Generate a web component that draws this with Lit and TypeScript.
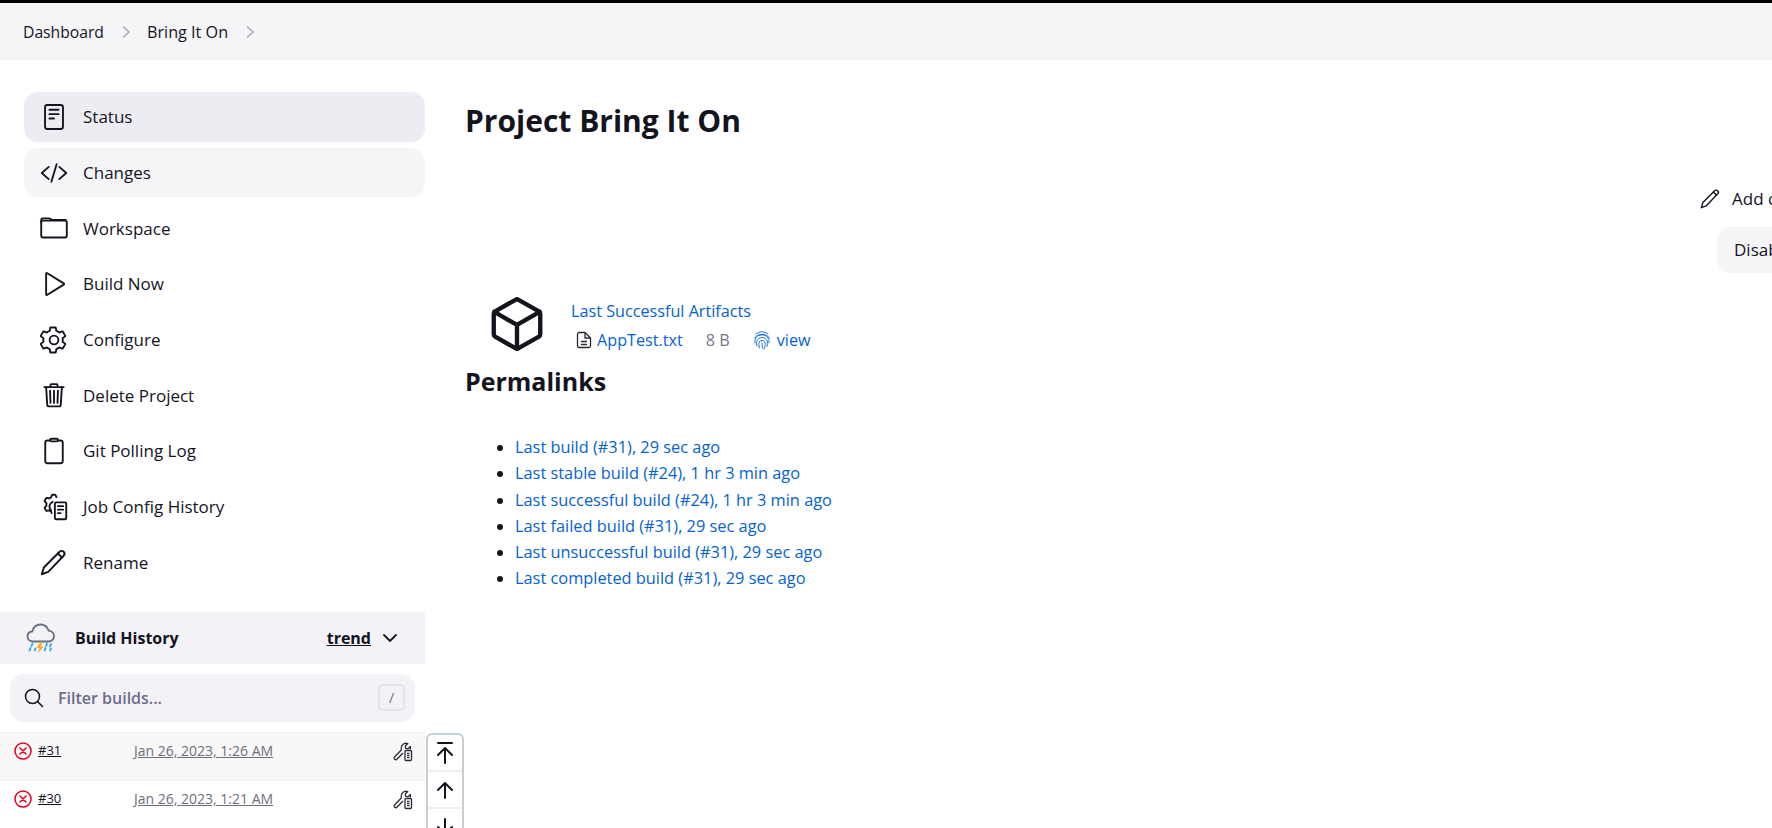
import { LitElement, css, html, svg } from 'lit';
import { customElement } from 'lit/decorators.js';

const stroke = (body: unknown, size = 28, box = 512, sw = 34) => html`
  <svg width=${size} height=${size} viewBox="0 0 ${box} ${box}" fill="none" stroke="currentColor"
    stroke-width=${sw} stroke-linecap="round" stroke-linejoin="round">${body}</svg>`;

const gear = svg`<path d="M256 176a80 80 0 1 0 0 160 80 80 0 0 0 0-160z"/><path d="M416 256c0-11-1-21-3-31l44-35c4-3 5-9 3-14l-42-72c-3-5-8-6-13-5l-52 21c-16-13-35-23-55-29l-8-55c-1-5-5-8-10-8h-84c-5 0-9 3-10 8l-8 55c-20 6-39 16-55 29l-52-21c-5-1-10 0-13 5l-42 72c-2 5-1 11 3 14l44 35c-2 10-3 20-3 31s1 21 3 31l-44 35c-4 3-5 9-3 14l42 72c3 5 8 6 13 5l52-21c16 13 35 23 55 29l8 55c1 5 5 8 10 8h84c5 0 9-3 10-8l8-55c20-6 39-16 55-29l52 21c5 1 10 0 13-5l42-72c2-5 1-11-3-14l-44-35c2-10 3-20 3-31z"/>`;

const pencil = svg`<path d="M32 480l38-124L358 68c20-20 54-20 74 0s20 54 0 74L150 438z"/><path d="M326 100l76 76"/>`;

const icons: Record<string, unknown> = {
  status: stroke(svg`<rect x="92" y="36" width="328" height="440" rx="40"/><path d="M172 124h168M172 204h168M172 284h84"/>`),
  changes: stroke(svg`<path d="M160 368L32 256l128-112M352 368l128-112-128-112M304 96l-96 320"/>`),
  workspace: stroke(svg`<path d="M22 150v-44c0-14 11-26 26-26h120c20 0 30 30 60 30h244"/><rect x="22" y="120" width="468" height="310" rx="32"/>`),
  build: stroke(svg`<path d="M112 70v372c0 12 13 18 22 12l300-186c8-5 8-18 0-24L134 58c-9-6-22 0-22 12z"/>`),
  configure: stroke(gear),
  del: stroke(svg`<path d="M112 112l20 320c1 18 15 32 32 32h184c18 0 31-14 32-32l20-320"/><path d="M80 112h352M192 112V72c0-9 7-16 16-16h96c9 0 16 7 16 16v40M256 176v224M184 176l8 224M328 176l-8 224"/>`),
  git: stroke(svg`<rect x="96" y="64" width="320" height="416" rx="40"/><rect x="184" y="32" width="144" height="48" rx="24" fill="#fff"/>`),
  history: stroke(svg`<path d="M300 74l-14-30c-4-7-10-12-18-12h-36c-8 0-14 5-17 12l-12 36c-13 5-25 12-36 20l-37-10c-7-2-15 1-19 7l-22 40c-4 7-3 15 3 21l27 28c-1 7-2 14-2 22s1 15 2 22l-27 28c-6 6-7 14-3 21l22 40c4 6 12 9 19 7l37-10c11 8 23 15 36 20l8 30"/><path d="M232 164a90 90 0 0 0-30 150"/><rect x="272" y="172" width="208" height="308" rx="24" fill="#fff"/><path d="M328 240h96M328 304h96M328 368h48"/>`),
  rename: stroke(pencil),
};

const menu = [
  { label: 'Status', icon: 'status', cls: 'active' },
  { label: 'Changes', icon: 'changes', cls: 'hover' },
  { label: 'Workspace', icon: 'workspace', cls: '' },
  { label: 'Build Now', icon: 'build', cls: '' },
  { label: 'Configure', icon: 'configure', cls: '' },
  { label: 'Delete Project', icon: 'del', cls: '' },
  { label: 'Git Polling Log', icon: 'git', cls: '' },
  { label: 'Job Config History', icon: 'history', cls: '' },
  { label: 'Rename', icon: 'rename', cls: '' },
];

const builds = [
  { id: '#31', date: 'Jan 26, 2023, 1:26 AM', cls: 'shaded' },
  { id: '#30', date: 'Jan 26, 2023, 1:21 AM', cls: '' },
];

const permalinks = [
  'Last build (#31), 29 sec ago',
  'Last stable build (#24), 1 hr 3 min ago',
  'Last successful build (#24), 1 hr 3 min ago',
  'Last failed build (#31), 29 sec ago',
  'Last unsuccessful build (#31), 29 sec ago',
  'Last completed build (#31), 29 sec ago',
];

const chevron = html`<svg class="crumb-sep" width="8" height="12" viewBox="0 0 8 12" fill="none" stroke="#adadbc" stroke-width="1.6"><path d="M1 .5L7 6l-6 5.500"/></svg>`;

const weather = html`<svg width="32" height="32" viewBox="0 0 32 32" fill="none">
  <path d="M8 19.500c-3 0-5.500-2-5.500-5 0-2.800 2-4.800 4.800-5C8.500 5 11.500 2.500 15.500 2.500c4 0 7 2.500 8.200 6.200 3 .3 5.300 2.500 5.300 5.500 0 3-2.500 5.300-5.500 5.300z" stroke="#667080" stroke-width="1.800"/>
  <path d="M15.500 20l-4 6h3l-1.500 5 6-6.500h-3.500l2.500-4.500z" fill="#f9a825"/>
  <path d="M7.500 21.500l-1 2.500M5.500 26l-1 2.500M10.500 26.500l-.8 2M22 21.500l-1 2.500M20.500 26l-.8 2.500M26 22l-1 2.500M26 26.500l-.8 2" stroke="#29a8e0" stroke-width="1.800" stroke-linecap="round"/>
</svg>`;

const failed = html`<svg width="18" height="18" viewBox="0 0 18 18" fill="none" stroke="#e6001f" stroke-width="1.500" stroke-linecap="round">
  <circle cx="9" cy="9" r="8"/><path d="M6 6l6 6M12 6l-6 6"/></svg>`;

const tools = html`<svg width="20" height="20" viewBox="0 0 20 20" fill="none" stroke="#2a2a33" stroke-width="1.300" stroke-linejoin="round">
  <path d="M1.500 15l6.800-7C7.500 4.500 9.500 1.500 13 1.200c.7 0 1.300.1 1.800.3L12.300 4l.4 2.300 2.300.4 2.300-2.300c.3 1 .3 2-.1 3"/>
  <path d="M1.500 15c-1.300 1.500.9 3.700 2.400 2.300l6.100-6.300"/>
  <rect x="12" y="8.500" width="6.500" height="10" rx="1" fill="#fff"/><path d="M14 11.300h2.500M14 13.500h2.500M14 15.700h2.500"/></svg>`;

const fileIcon = html`<svg width="16" height="18" viewBox="0 0 16 18" fill="none" stroke="#2a2a33" stroke-width="1.300" stroke-linejoin="round">
  <path d="M1.500 3c0-1 .7-1.500 1.500-1.500H9L14.500 7v8c0 1-.7 1.500-1.500 1.500H3c-.8 0-1.500-.5-1.500-1.500z"/><path d="M9 1.500V7h5.500M5 10.500h6M5 13.500h6"/></svg>`;

const fingerprint = html`<svg width="18" height="20" viewBox="0 0 18 20" fill="none" stroke="#1a73dc" stroke-width="1" stroke-linecap="round">
  <path d="M3 4c3.500-3 8.500-3 12 0"/><path d="M1.500 8c3-5 12-5 15 0"/><path d="M2 13c-1-6 3-8 7-8s8 2.500 7 8"/>
  <path d="M4 16c-1-3-1-8 5-8.500 6 .5 6 5 5 9"/><path d="M6.500 18c-1-3-1.500-7.500 2.500-7.500s3.500 4 2.500 8"/><path d="M9 13c0 2 .2 4 1 6"/></svg>`;

const cube = html`<svg width="62" height="62" viewBox="0 0 512 512" fill="none" stroke="#14141f" stroke-width="36" stroke-linejoin="round" stroke-linecap="round">
  <path d="M448 341V171c0-8-4-15-11-19L269 56c-8-5-18-5-26 0L75 152c-7 4-11 11-11 19v170c0 8 4 15 11 19l168 96c8 5 18 5 26 0l168-96c7-4 11-11 11-19z"/>
  <path d="M69 156l187 108 187-108M256 264v192"/></svg>`;

const arrow = (d: string) => html`<svg width="22" height="24" viewBox="0 0 22 24" fill="none" stroke="#14141f" stroke-width="2" stroke-linecap="round" stroke-linejoin="round"><path d=${d}/></svg>`;

@customElement('app-root')
export class AppRoot extends LitElement {
  static styles = css`
    :host {
      display: block;
      width: 1772px;
      height: 828px;
      overflow: hidden;
      background: #fff;
      color: #14141f;
      font-family: 'Open Sans', 'Noto Sans', sans-serif;
      font-size: 16px;
    }
    a { color: inherit; text-decoration: none; }

    .crumbs {
      display: flex;
      align-items: center;
      height: 57px;
      border-top: 3px solid #000;
      background: #f5f5f8;
      padding-left: 23px;
      font-size: 15.7px;
    }
    .crumbs .current { font-size: 16.2px; }
    .crumb-sep { margin: 0 17px 0 18px; }

    .page { display: flex; width: 2100px; }

    .side { position: relative; width: 425px; flex: none; padding-top: 32px; }
    .menu { display: flex; flex-direction: column; gap: 6px; margin: 0 0 0 24px; }
    .item {
      display: flex;
      align-items: center;
      height: 49.7px;
      border-radius: 14px;
      padding-left: 16px;
      gap: 15px;
      font-size: 17px;
    }
    .item svg { flex: none; }
    .item.active { background: #ecedf3; }
    .item.hover { background: #f5f5f8; }

    .history-head {
      display: flex;
      align-items: center;
      height: 52px;
      margin-top: 24.7px;
      background: #f2f2f7;
      padding: 0 26px 0 25px;
      font-weight: 700;
    }
    .history-head .title { margin-left: 18px; flex: 1; }
    .history-head .trend { text-decoration: underline; margin-right: 10px; }

    .filter {
      display: flex;
      align-items: center;
      height: 48px;
      margin: 10px;
      padding: 0 10px 0 14px;
      background: #f2f2f7;
      border-radius: 14px;
      color: #6c6c8a;
      font-weight: 600;
    }
    .filter span { flex: 1; margin-left: 14px; }
    .filter kbd {
      width: 27px;
      height: 27px;
      box-sizing: border-box;
      border: 2px solid #e4e4ee;
      border-radius: 5px;
      font: inherit;
      font-weight: 400;
      font-size: 14px;
      text-align: center;
      line-height: 23px;
    }

    .row {
      display: flex;
      height: 39px;
      border-top: 1px solid #f0f0f0;
      padding: 8px 12px 0 14px;
      font-size: 14px;
    }
    .row.shaded { background: #f8f8f8; }
    .row .num { margin-left: 6px; width: 96px; font-size: 13px; line-height: 19px; text-decoration: underline; }
    .row .date { flex: 1; color: #6f6f7a; line-height: 19px; text-decoration: underline; }
    .row svg { margin-top: 1px; }

    .scroller {
      position: absolute;
      left: 426px;
      top: 673px;
      width: 38px;
      height: 120px;
      border: 2px solid #c5d0d6;
      border-radius: 6px;
      background: #fff;
      box-sizing: border-box;
    }
    .scroller div {
      height: 35px;
      display: flex;
      align-items: center;
      justify-content: center;
      border-bottom: 2px solid #eee;
    }

    .main { flex: none; width: 1600px; padding-left: 40px; box-sizing: border-box; }
    h1 { margin: 0; padding-top: 38px; font-size: 30px; line-height: 46px; font-weight: 700; }
    .actions { display: flex; flex-direction: column; align-items: flex-start; margin-top: 42.5px; font-size: 17px; }
    .add { display: flex; align-items: center; gap: 11px; height: 23px; margin-left: 1235px; }
    .disable {
      background: #f5f5f8;
      border-radius: 14px;
      height: 46px;
      line-height: 46px;
      padding: 0 17px;
      margin: 17.5px 0 0 1252px;
    }

    .artifacts { display: flex; margin: 20px 0 0 20.5px; }
    .artifact-text { margin: 6px 0 0 23.5px; color: #0563d1; font-weight: 500; font-size: 16.2px; }
    .artifact-title { display: block; line-height: 24px; }
    .files { display: flex; align-items: center; height: 34px; padding-left: 5px; }
    .files .size { color: #77778c; font-weight: 400; margin: 0 23px; }
    .files .name { margin-left: 5px; }
    .files .view { margin-left: 6px; }
    h2 { margin: 6px 0 0; font-size: 25px; line-height: 36px; font-weight: 700; }
    ul { margin: 35px 0 0; padding-left: 50px; color: #0563d1; font-weight: 500; font-size: 16.35px; line-height: 26.3px; }
    li::marker { color: #14141f; }
  `;

  render() {
    return html`
      <div class="crumbs">
        <a>Dashboard</a>${chevron}<a class="current">Bring It On</a>${chevron}
      </div>
      <div class="page">
        <div class="side">
          <div class="menu">
            ${menu.map(
              (m) => html`<a class="item ${m.cls}">${icons[m.icon]}<span>${m.label}</span></a>`,
            )}
          </div>
          <div class="history-head">
            ${weather}
            <span class="title">Build History</span>
            <a class="trend">trend</a>
            <svg width="18" height="18" viewBox="0 0 18 18" fill="none" stroke="#14141f" stroke-width="1.800" stroke-linecap="round"><path d="M3 6l6 6 6-6"/></svg>
          </div>
          <div class="filter">
            <svg width="20" height="20" viewBox="0 0 20 20" fill="none" stroke="#14141f" stroke-width="1.500" stroke-linecap="round"><circle cx="8.500" cy="8.500" r="7"/><path d="M13.500 13.500l5 5"/></svg>
            <span>Filter builds...</span>
            <kbd>/</kbd>
          </div>
          ${builds.map(
            (b) => html`<div class="row ${b.cls}">
              ${failed}<a class="num">${b.id}</a><a class="date">${b.date}</a>${tools}
            </div>`,
          )}
          <div class="scroller">
            <div>${arrow('M4 2h14M11 22V8M4 14l7-7 7 7')}</div>
            <div>${arrow('M11 20V5M4 12l7-7 7 7')}</div>
            <div>${arrow('M11 4v15M4 12l7 7 7-7')}</div>
          </div>
        </div>
        <div class="main">
          <h1>Project Bring It On</h1>
          <div class="actions">
            <a class="add">${stroke(pencil, 21)}<span>Add description</span></a>
            <a class="disable">Disable Project</a>
          </div>
          <div class="artifacts">
            ${cube}
            <div class="artifact-text">
              <a class="artifact-title">Last Successful Artifacts</a>
              <div class="files">
                ${fileIcon}<a class="name">AppTest.txt</a>
                <span class="size">8 B</span>
                ${fingerprint}<a class="view">view</a>
              </div>
            </div>
          </div>
          <h2>Permalinks</h2>
          <ul>
            ${permalinks.map((p) => html`<li><a>${p}</a></li>`)}
          </ul>
        </div>
      </div>
    `;
  }
}
